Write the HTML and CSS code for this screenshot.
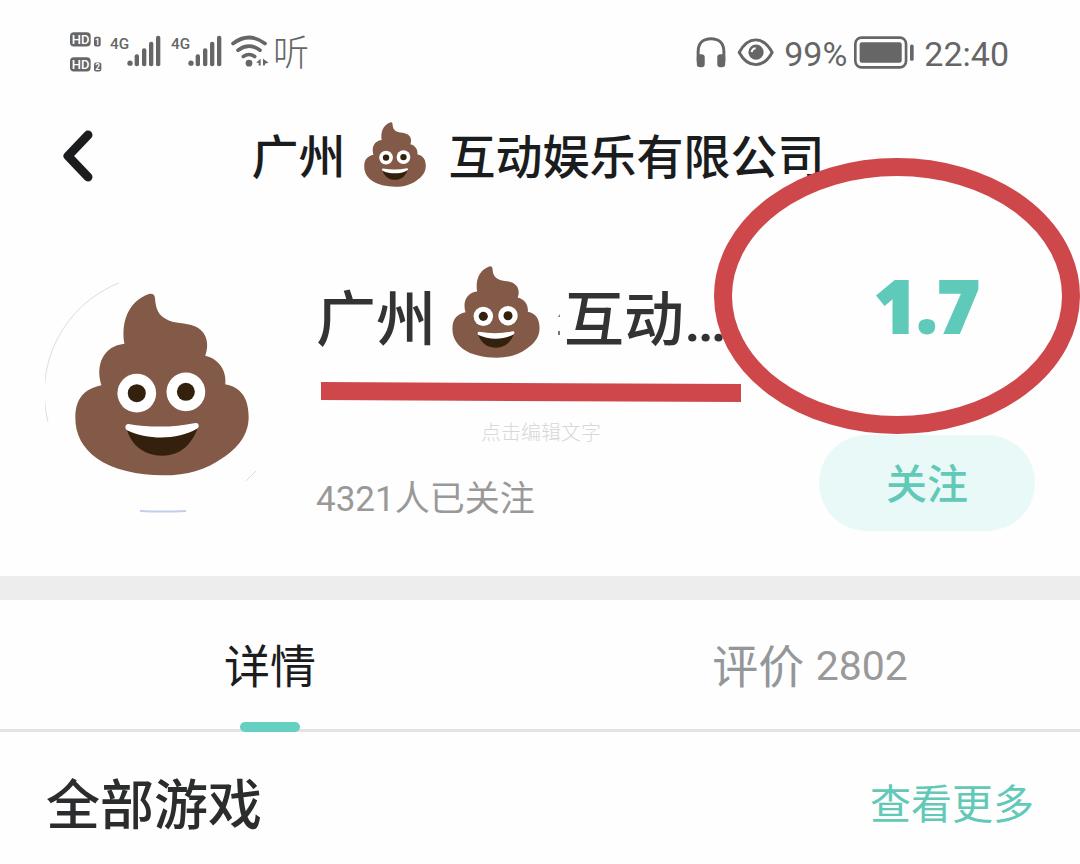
FILE: index.html
```html
<!DOCTYPE html>
<html lang="zh-CN">
<head>
<meta charset="utf-8">
<meta name="viewport" content="width=device-width, initial-scale=1">
<title>广州互动娱乐有限公司</title>
<link rel="stylesheet" href="styles.css">
</head>
<body>
<svg class="sprite" aria-hidden="true">
  <symbol id="poop" viewBox="105 55 521 548">
    <path fill="#835a47" d="M329 57Q342 56 344 67C347 102 353 124 386 137C414 148 448 143 474 160C501 178 507 211 495 243C535 252 560 288 555 328C603 337 625 371 625 426C625 480 592 519 548 548C500 583 441 601 369 601C294 600 218 585 169 549C130 520 105 480 106 426C107 371 132 342 184 331C165 270 190 214 253 207C243 148 260 80 329 57Z"/>
    <circle cx="290" cy="355" r="58" fill="#fff"/><circle cx="437" cy="351" r="58" fill="#fff"/>
    <circle cx="290" cy="355" r="27" fill="#33200d"/><circle cx="437" cy="351" r="27" fill="#33200d"/>
    <path fill="#33200d" d="M260 463C274 511 312 542 366 542C418 541 454 511 472 459Z"/>
    <path fill="#fff" d="M265 447C330 458 400 458 466 444C476 443 479 455 471 461C412 496 324 496 261 466C252 459 256 446 265 447Z"/>
  </symbol>
</svg>

<div class="status">
  <div class="status-group">
    <svg class="signals" viewBox="30 35 600 125" role="img" aria-label="HD 4G Wi-Fi">
      <g fill="#666">
        <rect x="30" y="38" width="62" height="43" rx="12"/><rect x="30" y="113" width="62" height="43" rx="12"/>
        <rect x="102" y="52" width="20" height="29" rx="6"/><rect x="102" y="129" width="22" height="27" rx="6"/>
        <circle cx="210" cy="131" r="8"/><rect x="224" y="104" width="13" height="36" rx="6"/><rect x="246" y="86" width="13" height="54" rx="6"/><rect x="267" y="67" width="13" height="73" rx="6"/><rect x="288" y="49" width="13" height="91" rx="6"/>
        <circle cx="393" cy="131" r="8"/><rect x="407" y="104" width="13" height="36" rx="6"/><rect x="429" y="86" width="13" height="54" rx="6"/><rect x="450" y="67" width="13" height="73" rx="6"/><rect x="471" y="49" width="13" height="91" rx="6"/>
        <circle cx="567" cy="131" r="10"/>
        <path d="M602 118v20h-6v-8h-8zM609 118l17 12-10 2-2 6h-5z"/>
      </g>
      <g fill="none" stroke="#666" stroke-width="11" stroke-linecap="round">
        <path d="M519 72Q567 36 615 72M534 92Q567 68 600 92M550 111Q567 99 584 111"/>
      </g>
      <g class="badge-text"><text x="35" y="73">HD</text><text x="35" y="148">HD</text></g>
      <g class="badge-digit"><text x="105" y="76">1</text><text x="106" y="152">2</text></g>
      <g class="net-text"><text x="150" y="89">4G</text><text x="333" y="89">4G</text></g>
    </svg>
    <span class="carrier">听</span>
  </div>
  <div class="status-group status-right">
    <svg class="headphones" viewBox="24 34 90 94" aria-hidden="true">
      <path d="M30 108V78C30 52 46 39 69 39S108 52 108 78V108" fill="none" stroke="#666" stroke-width="9"/>
      <rect x="26" y="86" width="24" height="40" rx="10" fill="#666"/><rect x="88" y="86" width="24" height="40" rx="10" fill="#666"/>
    </svg>
    <svg class="eye" viewBox="145 34 114 94" aria-hidden="true">
      <path d="M151 81C178 30 224 30 251 81C224 130 178 130 151 81Z" fill="none" stroke="#666" stroke-width="9" stroke-linejoin="round"/>
      <circle cx="202" cy="80" r="23" fill="#666"/><path d="M189 80Q190 69 201 68" fill="none" stroke="#fff" stroke-width="6"/>
    </svg>
    <span>99%</span>
    <svg class="battery" viewBox="494 32 184 98" aria-hidden="true">
      <rect x="498" y="36" width="153" height="90" rx="19" fill="none" stroke="#666" stroke-width="8"/>
      <rect x="511" y="50" width="127" height="62" rx="7" fill="#666"/><rect x="663" y="57" width="11" height="49" rx="5" fill="#666"/>
    </svg>
    <time>22:40</time>
  </div>
</div>

<header class="topbar">
  <button class="back" type="button" aria-label="返回">
    <svg viewBox="0 0 32 54" aria-hidden="true"><path d="M26 6L6 27L26 48" fill="none" stroke="#1b1c1d" stroke-width="9" stroke-linecap="round" stroke-linejoin="round"/></svg>
  </button>
  <h1 class="title"><span>广州</span><svg class="title-icon" aria-hidden="true"><use href="#poop"/></svg><span>互动娱乐有限公司</span></h1>
</header>

<main>
  <section class="profile">
    <div class="avatar">
      <svg class="avatar-ring" viewBox="0 0 236 236" fill="none" aria-hidden="true">
        <path d="M3 145A118 118 0 0 1 74 6" stroke="#ddd"/>
        <path d="M201 204L211 194" stroke="#ddd"/>
        <path d="M95 234Q118 235 141 234" stroke="#c3cdec" stroke-width="2"/>
      </svg>
      <svg class="avatar-icon" aria-hidden="true"><use href="#poop"/></svg>
    </div>
    <div class="info">
      <h2 class="name"><span>广州</span><svg class="name-icon" aria-hidden="true"><use href="#poop"/></svg><svg class="specks" viewBox="0 0 3 22" aria-hidden="true"><path d="M0 3l2-3v3zM0 17h2v4H0z" fill="#777"/></svg><span>互动…</span></h2>
      <svg class="underline" viewBox="0 0 420 20" preserveAspectRatio="none" aria-hidden="true"><path d="M0 0L420 2V20L0 18Z" fill="#ce484b"/></svg>
      <p class="hint">点击编辑文字</p>
      <p class="followers">4321人已关注</p>
    </div>
    <div class="side">
      <strong class="score">1.7</strong>
      <svg class="oval" viewBox="0 0 366 276" aria-hidden="true"><ellipse cx="183" cy="138" rx="174" ry="129" fill="none" stroke="#ce484b" stroke-width="18"/></svg>
      <button class="follow" type="button">关注</button>
    </div>
  </section>

  <nav class="tabs">
    <a class="tab active" href="#details">详情</a>
    <a class="tab" href="#reviews">评价 <span class="count">2802</span></a>
  </nav>

  <section class="games" id="details">
    <h2>全部游戏</h2>
    <a href="#all">查看更多</a>
  </section>
</main>
</body>
</html>
```
FILE: styles.css
```css
* { box-sizing: border-box; }
body {
  margin: 0;
  background: #fefefe;
  color: #1b1c1d;
  font-family: Roboto, "Noto Sans CJK SC", sans-serif;
  overflow-x: hidden;
}
h1, h2, p { margin: 0; font-weight: 500; }
button { border: 0; padding: 0; background: none; font: inherit; cursor: pointer; }
a { color: inherit; text-decoration: none; }
svg { display: block; flex: none; }
.sprite { position: absolute; width: 0; height: 0; }

.status {
  display: flex;
  justify-content: space-between;
  align-items: center;
  height: 104px;
  padding: 0 71px 0 70px;
  color: #666;
}
.status-group { display: flex; align-items: center; }
.signals { width: 200px; height: 42px; }
.badge-text { font: 500 39px Roboto, sans-serif; fill: #fff; }
.badge-digit { font: 700 25px Roboto, sans-serif; fill: #fff; }
.net-text { font: 500 46px Roboto, sans-serif; fill: #666; }
.carrier { margin-left: 3px; padding-top: 3px; font-size: 36px; line-height: 48px; font-weight: 300; }
.status-right { font-size: 34px; line-height: 40px; }
.status-right span, .status-right time { padding-top: 3px; }
.headphones { width: 30px; height: 31px; }
.eye { width: 38px; height: 31px; margin: 0 9px 0 11px; }
.battery { width: 61px; height: 33px; margin: 0 9px 0 7px; }

.topbar {
  display: flex;
  align-items: center;
  height: 104px;
  padding: 0 62px;
}
.back { width: 32px; }
.back svg { width: 32px; height: 54px; }
.title {
  flex: 1;
  display: flex;
  justify-content: center;
  align-items: center;
  padding-right: 36px;
  font-size: 47px;
  line-height: 64px;
  white-space: nowrap;
}
.title span { padding-top: 4px; }
.title-icon { width: 62px; height: 65px; margin: 0 23px 4px 18px; }

.profile {
  display: flex;
  padding: 69px 45px 45px;
  border-bottom: 24px solid #ededed;
}
.avatar {
  display: grid;
  place-items: center;
  width: 236px;
  height: 236px;
  flex: none;
}
.avatar > svg { grid-area: 1 / 1; }
.avatar-ring { width: 236px; height: 236px; }
.avatar-icon { width: 174px; height: 183px; margin: 0 2px 22px 0; }
.info { flex: 1; min-width: 0; padding-left: 35px; }
.name {
  display: flex;
  align-items: center;
  height: 80px;
  color: #333;
  font-size: 60px;
  line-height: 80px;
  white-space: nowrap;
}
.name span { padding-top: 8px; }
.name-icon { width: 88px; height: 92px; margin: 0 18px 10px 16px; }
.specks { width: 3px; height: 22px; margin: 16px 3px 0 0; }
.underline { width: 420px; height: 20px; margin: 25px 0 0 5px; }
.hint {
  margin-top: 17px;
  padding-left: 165px;
  color: #d8d8d8;
  font-size: 20px;
  line-height: 28px;
  font-weight: 300;
}
.followers {
  margin-top: 29px;
  color: #999;
  font-size: 35px;
  line-height: 48px;
  font-weight: 400;
}
.side {
  position: relative;
  display: flex;
  flex-direction: column;
  align-items: center;
  width: 216px;
  flex: none;
}
.score {
  height: 158px;
  color: #5fcaba;
  font: 800 72px/56px "Open Sans", "Noto Sans", sans-serif;
  -webkit-text-stroke: 2px #5fcaba;
}
.oval { position: absolute; top: -119px; right: -45px; width: 366px; height: 276px; pointer-events: none; }
.follow {
  width: 216px;
  height: 96px;
  padding-top: 3px;
  border-radius: 48px;
  background: #e9f9f8;
  color: #62c9b8;
  font-size: 41px;
  line-height: 56px;
  font-weight: 500;
}

.tabs { display: flex; border-bottom: 3px solid #e3e3e3; }
.tab {
  position: relative;
  flex: 1;
  height: 129px;
  padding-top: 3px;
  color: #93979a;
  font-size: 46px;
  line-height: 128px;
  text-align: center;
}
.count { color: #999; font-size: 41px; line-height: 48px; vertical-align: 3px; }
.active { color: #1b1c1d; }
.active::after {
  content: "";
  position: absolute;
  bottom: -3px;
  left: 50%;
  width: 60px;
  height: 10px;
  margin-left: -30px;
  border-radius: 5px;
  background: #65d0c1;
}

.games {
  display: flex;
  justify-content: space-between;
  align-items: center;
  padding: 35px 46px 20px;
}
.games h2 { padding-top: 4px; color: #2b2c2d; font-size: 54px; line-height: 72px; }
.games a { color: #62c9b8; font-size: 41px; line-height: 56px; }
```
